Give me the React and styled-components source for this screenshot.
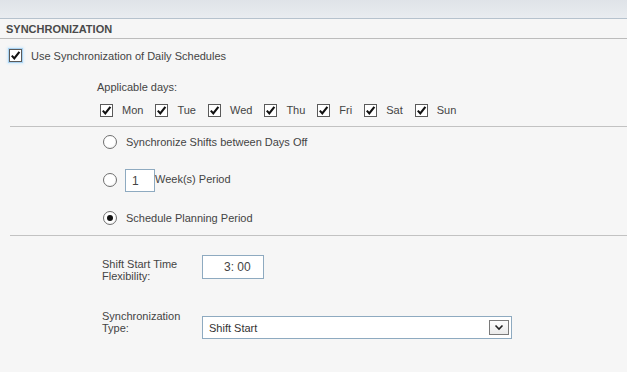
import React from 'react';
import styled, { createGlobalStyle, css } from 'styled-components';

const textColor = '#444';
const lineColor = '#c2c2c2';
const fieldBorder = '#8eaac0';

const days = ['Mon', 'Tue', 'Wed', 'Thu', 'Fri', 'Sat', 'Sun'];

const Check = ({ focused }) => (
  <Box focused={focused}>
    <svg width="11" height="11" viewBox="0 0 11 11">
      <path d="M1.8 5.6 L4.3 8.4 L9.4 1.8" fill="none" stroke="#111" strokeWidth="2.1" />
    </svg>
  </Box>
);

const App = () => (
  <Page>
    <GlobalStyle />
    <TopBar />
    <Header>Synchronization</Header>

    <MainRow>
      <Check focused />
      <span>Use Synchronization of Daily Schedules</span>
    </MainRow>

    <DaysBlock>
      <Caption>Applicable days:</Caption>
      <DaysRow>
        {days.map(d => (
          <Day key={d}>
            <Check />
            <span>{d}</span>
          </Day>
        ))}
      </DaysRow>
    </DaysBlock>

    <Divider />

    <RadioGroup>
      <RadioRow>
        <Radio />
        <OptionText>Synchronize Shifts between Days Off</OptionText>
      </RadioRow>
      <RadioRow>
        <Radio />
        <SmallInput>1</SmallInput>
        <WeekText>Week(s) Period</WeekText>
      </RadioRow>
      <RadioRow>
        <Radio checked />
        <OptionText>Schedule Planning Period</OptionText>
      </RadioRow>
    </RadioGroup>

    <Divider />

    <Form>
      <FormRow rowHeight={24} labelOffset={3}>
        <Label>Shift Start Time<br />Flexibility:</Label>
        <TimeInput>3: 00</TimeInput>
      </FormRow>
      <FormRow rowHeight={23} labelOffset={-6} second>
        <Label>Synchronization<br />Type:</Label>
        <Select>
          <span>Shift Start</span>
          <DropButton>
            <svg width="10" height="7" viewBox="0 0 10 7">
              <path d="M1.5 1.5 L5 5 L8.5 1.5" fill="none" stroke="#222" strokeWidth="1.6" />
            </svg>
          </DropButton>
        </Select>
      </FormRow>
    </Form>
  </Page>
);

export default App;

const GlobalStyle = createGlobalStyle`
  html, body {
    margin: 0;
    padding: 0;
    background: #f6f6f6;
  }
  body {
    font-family: "Liberation Sans", Arial, sans-serif;
    font-size: 11px;
    color: ${textColor};
  }
`;

const Page = styled.div`
  width: 627px;
  height: 372px;
  overflow: hidden;
  background: #f6f6f6;
`;

const TopBar = styled.div`
  height: 18px;
  background: linear-gradient(#dfe3e8, #e9ecf0);
  border-bottom: 1px solid #b6c2cd;
`;

const Header = styled.div`
  height: 19px;
  line-height: 20px;
  padding-left: 6px;
  font-weight: bold;
  text-transform: uppercase;
  color: #4a4a4a;
  border-bottom: 1px solid #bcbcbc;
`;

const Box = styled.span`
  flex: none;
  width: 11px;
  height: 11px;
  display: inline-flex;
  align-items: center;
  justify-content: center;
  background: #fff;
  border: 1px solid #5a5a5a;

  ${p => p.focused && css`
    box-shadow: 0 0 0 1px #a9d2f2, 0 0 2px 2px #d6ecfb;
  `}
`;

const MainRow = styled.div`
  display: flex;
  align-items: center;
  gap: 9px;
  height: 15px;
  margin-top: 9px;
  padding-left: 9px;
`;

const DaysBlock = styled.div`
  padding-left: 97px;
  margin-top: 17px;
`;

const Caption = styled.div`
  line-height: 14px;
`;

const DaysRow = styled.div`
  display: flex;
  align-items: center;
  height: 13px;
  margin-top: 10px;
  padding-left: 3px;
`;

const Day = styled.label`
  display: flex;
  align-items: center;
  gap: 9px;
  margin-right: 12px;

  & > span:last-child {
    margin-top: -2px;
  }
`;

const Divider = styled.div`
  height: 1px;
  margin: 9px 0 0 10px;
  background: ${lineColor};
`;

const RadioGroup = styled.div`
  display: flex;
  flex-direction: column;
  gap: 14px;
  padding: 3px 0 0 103px;

  & + ${Divider} {
    margin-top: 5px;
  }
`;

const RadioRow = styled.div`
  display: flex;
  align-items: center;
  height: 24px;
`;

const OptionText = styled.span`
  margin-left: 9px;
`;

const Radio = styled.div`
  flex: none;
  position: relative;
  width: 12px;
  height: 12px;
  border-radius: 50%;
  border: 1px solid #6f6f6f;
  background: radial-gradient(circle at 40% 35%, #fff 55%, #e8e8e8);

  ${p => p.checked && css`
    &::after {
      content: '';
      position: absolute;
      left: 3px;
      top: 3px;
      width: 6px;
      height: 6px;
      border-radius: 50%;
      background: #111;
    }
  `}
`;

const SmallInput = styled.div`
  box-sizing: border-box;
  width: 30px;
  height: 23px;
  margin-left: 8px;
  padding-left: 6px;
  line-height: 22px;
  font-size: 12px;
  background: #fff;
  border: 1px solid ${fieldBorder};
`;

const WeekText = styled.div`
  align-self: flex-start;
  margin-top: 5px;
`;

const Form = styled.div`
  padding: 19px 0 0 102px;
`;

const FormRow = styled.div`
  display: grid;
  grid-template-columns: 100px auto;
  grid-template-rows: ${p => p.rowHeight}px;
  align-items: center;
  margin-top: ${p => (p.second ? '37px' : '0')};

  & > ${() => Label} {
    align-self: start;
    margin-top: ${p => p.labelOffset}px;
  }
`;

const Label = styled.div`
  line-height: 12px;
`;

const TimeInput = styled.div`
  box-sizing: border-box;
  width: 62px;
  height: 24px;
  padding-left: 21px;
  line-height: 23px;
  font-size: 12px;
  background: #fff;
  border: 1px solid ${fieldBorder};
`;

const Select = styled.div`
  box-sizing: border-box;
  display: flex;
  align-items: center;
  justify-content: space-between;
  width: 310px;
  height: 23px;
  padding: 0 2px 0 6px;
  font-size: 11px;
  color: #333;
  background: #fff;
  border: 1px solid ${fieldBorder};
`;

const DropButton = styled.span`
  box-sizing: border-box;
  display: flex;
  align-items: center;
  justify-content: center;
  width: 20px;
  height: 15px;
  border: 1px solid #7a7a7a;
  background: linear-gradient(#fdfdfd, #eaeaea);
`;
